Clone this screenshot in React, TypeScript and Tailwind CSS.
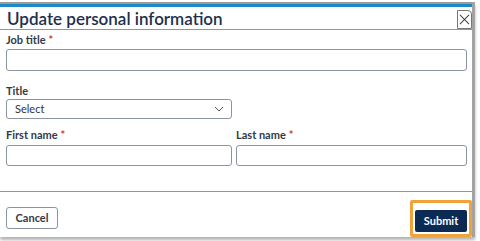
import React from "react";

const Req = () => <span className="ml-[3px] text-[#d9363e]">*</span>;

const Label = ({ text, required }: { text: string; required?: boolean }) => (
  <label className="mb-[2px] block text-[11px] font-bold leading-[13px] text-[#333a45]">
    {text}
    {required && <Req />}
  </label>
);

export default function App() {
  return (
    <div className="h-[241px] w-[480px] overflow-hidden bg-white font-['Lato',sans-serif]">
      <div className="mt-[2px] w-[475px] border-r-[3px] border-[#a3a3a3] bg-white shadow-[0_3px_3px_rgba(0,0,0,0.3)]">
        <div className="h-[2px] bg-[#9a9a9a]" />
        <div className="h-[3px] bg-[#1b8ac4]" />

        {/* Header */}
        <div className="flex h-[23px] items-start justify-between border-b border-[#8f96a0] pl-[7px]">
          <h1 className="pt-[3px] text-[17px] font-semibold leading-[18px] text-[#1e2f4d]">
            Update personal information
          </h1>
          <button className="mt-[3px] flex h-[19px] w-[15px] items-center justify-center rounded-tr-[4px] border border-[#777] bg-white">
            <svg width="11" height="11" viewBox="0 0 12 12" stroke="#444" strokeWidth="1.1">
              <path d="M1 1 L11 11 M11 1 L1 11" />
            </svg>
          </button>
        </div>

        {/* Body */}
        <div className="flex flex-col pl-[6px] pr-[5px] pt-[3px]">
          <div>
            <Label text="Job title" required />
            <input className="h-[22px] w-full rounded-[3px] border border-[#8a95a3] bg-white" />
          </div>

          <div className="mt-[12px] w-[226px]">
            <Label text="Title" />
            <div className="flex h-[20px] items-center justify-between rounded-[3px] border border-[#8a95a3] pl-[8px] pr-[7px] text-[11px] text-[#333]">
              <span>Select</span>
              <svg width="10" height="6" viewBox="0 0 10 6" fill="none" stroke="#555" strokeWidth="1">
                <path d="M1 1 L5 5 L9 1" />
              </svg>
            </div>
          </div>

          <div className="mt-[9px] grid grid-cols-[226px_1fr] gap-[4px]">
            <div>
              <Label text="First name" required />
              <input className="h-[21px] w-full rounded-[3px] border border-[#8a95a3] bg-white" />
            </div>
            <div>
              <Label text="Last name" required />
              <input className="h-[21px] w-full rounded-[3px] border border-[#8a95a3] bg-white" />
            </div>
          </div>
        </div>

        {/* Footer */}
        <div className="mt-[24px] flex items-start justify-between border-t border-[#8f96a0] pl-[6px] pt-[8px]">
          <button className="mt-[7px] h-[22px] w-[52px] rounded-[3px] border border-[#8a95a3] bg-white text-[11px] font-bold text-[#333a45]">
            Cancel
          </button>
          <div className="rounded-[2px] border-[3px] border-[#f0a33a] px-[2px] pb-[2px] pt-[4px]">
            <button className="h-[22px] w-[52px] rounded-[2px] bg-[#0b2b55] text-[11px] font-bold text-white">
              Submit
            </button>
          </div>
        </div>
      </div>
    </div>
  );
}
